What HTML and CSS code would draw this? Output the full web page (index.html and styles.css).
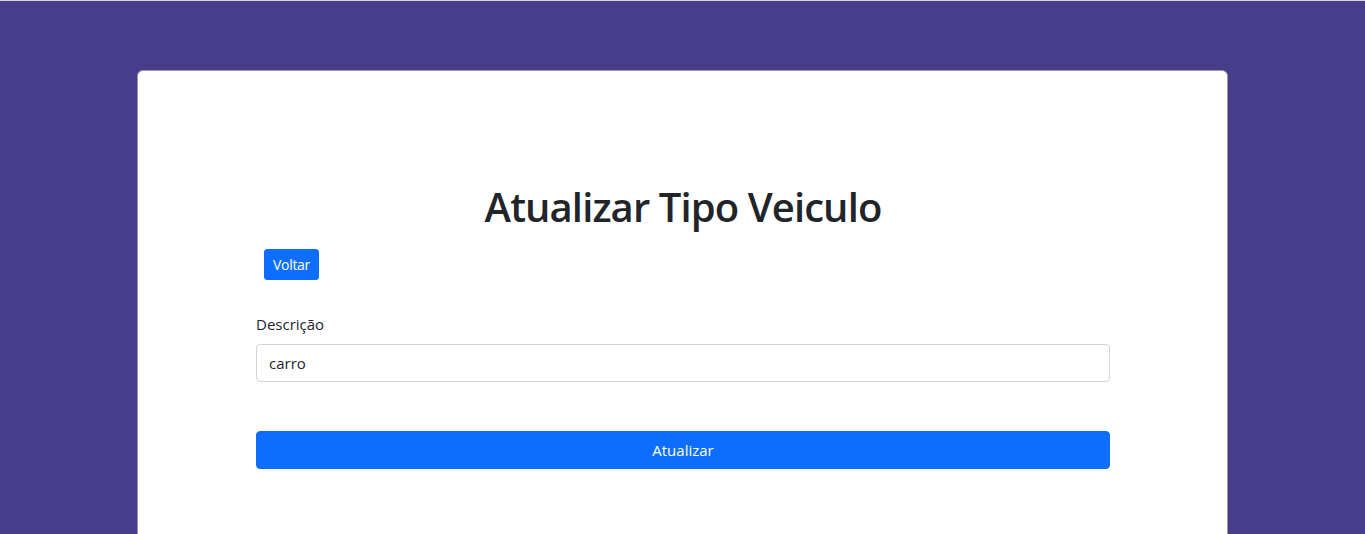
FILE: index.html
```html
<!DOCTYPE html>
<html lang="pt-BR">
<head>
<meta charset="utf-8">
<title>Atualizar Tipo Veiculo</title>
<link rel="stylesheet" href="styles.css">
</head>
<body>
<main class="page">
  <section class="card">
    <h1 class="title">Atualizar Tipo Veiculo</h1>
    <div class="back-row">
      <a class="btn btn-sm" href="#">Voltar</a>
    </div>
    <form class="form">
      <label class="form-label" for="descricao">Descrição</label>
      <input class="form-control" id="descricao" type="text" value="carro">
      <button class="btn btn-block" type="button">Atualizar</button>
    </form>
  </section>
</main>
</body>
</html>
```

FILE: styles.css
```css
* { box-sizing: border-box; }

html, body {
  margin: 0;
  padding: 0;
}

body {
  background: #483d8b;
  border-top: 1px solid #d4d4d8;
  font-family: "Open Sans", "Noto Sans", "Liberation Sans", sans-serif;
  color: #212529;
  height: 534px;
  overflow: hidden;
}

.page {
  padding-top: 69px;
  padding-left: 137px;
}

.card {
  width: 1091px;
  min-height: 600px;
  background: #fff;
  border: 1px solid #9a98a8;
  border-radius: 6px;
  padding: 112px 117px 0 118px;
}

.title {
  margin: 0 0 8px;
  text-align: center;
  font-size: 40px;
  font-weight: 600;
  line-height: 48px;
  letter-spacing: -0.9px;
}

.back-row {
  padding-left: 8px;
  margin-top: 18px;
}

.btn {
  display: inline-block;
  background: #0d6efd;
  color: #fff;
  text-decoration: none;
  border: 1px solid #0d6efd;
  font-family: inherit;
  text-align: center;
}

.btn-sm {
  font-size: 14px;
  line-height: 21px;
  padding: 4px 8px;
  border-radius: 3px;
  letter-spacing: -0.3px;
}

.form {
  display: flex;
  flex-direction: column;
  margin-top: 32px;
}

.form-label {
  font-size: 15px;
  line-height: 24px;
  margin-bottom: 8px;
  height: 24px;
}

.form-control {
  margin-top: 0;
  height: 38px;
  border: 1px solid #ced4da;
  border-radius: 4px;
  padding: 6px 12px;
  font-size: 15px;
  font-family: inherit;
  color: #212529;
}

.btn-block {
  margin-top: 49px;
  height: 38px;
  width: 100%;
  border-radius: 4px;
  font-size: 15px;
  line-height: 24px;
  padding: 6px 12px;
}
```
